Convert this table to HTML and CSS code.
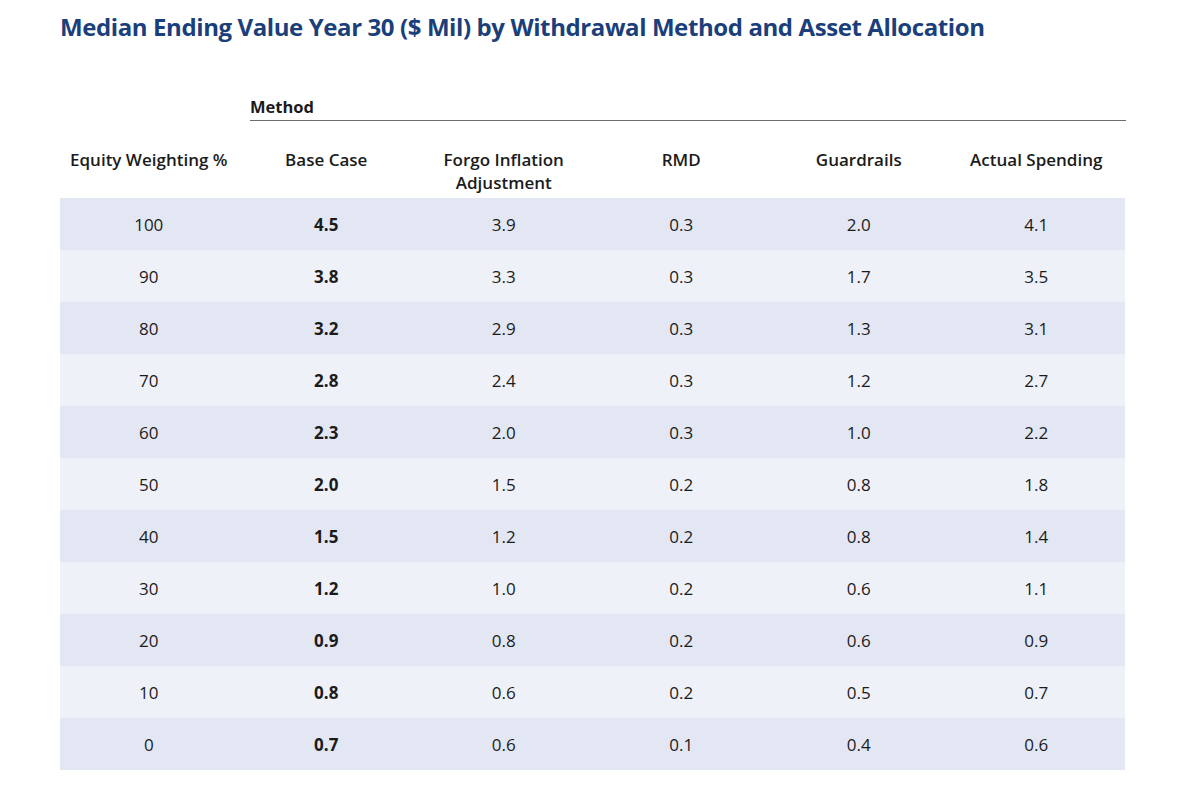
FILE: index.html
```html
<!DOCTYPE html>
<html>
<head>
<meta charset="utf-8">
<link rel="stylesheet" href="styles.css">
</head>
<body>
<h1 class="title">Median Ending Value Year 30 ($ Mil) by Withdrawal Method and Asset Allocation</h1>
<div class="wrap">
  <div class="method">Method</div>
  <div class="grid head">
    <div class="cell">Equity Weighting %</div>
    <div class="cell">Base Case</div>
    <div class="cell">Forgo Inflation<br>Adjustment</div>
    <div class="cell">RMD</div>
    <div class="cell">Guardrails</div>
    <div class="cell">Actual Spending</div>
  </div>
  <div class="rows">
    <div class="grid row"><div class="cell">100</div><div class="cell b">4.5</div><div class="cell">3.9</div><div class="cell">0.3</div><div class="cell">2.0</div><div class="cell">4.1</div></div>
    <div class="grid row"><div class="cell">90</div><div class="cell b">3.8</div><div class="cell">3.3</div><div class="cell">0.3</div><div class="cell">1.7</div><div class="cell">3.5</div></div>
    <div class="grid row"><div class="cell">80</div><div class="cell b">3.2</div><div class="cell">2.9</div><div class="cell">0.3</div><div class="cell">1.3</div><div class="cell">3.1</div></div>
    <div class="grid row"><div class="cell">70</div><div class="cell b">2.8</div><div class="cell">2.4</div><div class="cell">0.3</div><div class="cell">1.2</div><div class="cell">2.7</div></div>
    <div class="grid row"><div class="cell">60</div><div class="cell b">2.3</div><div class="cell">2.0</div><div class="cell">0.3</div><div class="cell">1.0</div><div class="cell">2.2</div></div>
    <div class="grid row"><div class="cell">50</div><div class="cell b">2.0</div><div class="cell">1.5</div><div class="cell">0.2</div><div class="cell">0.8</div><div class="cell">1.8</div></div>
    <div class="grid row"><div class="cell">40</div><div class="cell b">1.5</div><div class="cell">1.2</div><div class="cell">0.2</div><div class="cell">0.8</div><div class="cell">1.4</div></div>
    <div class="grid row"><div class="cell">30</div><div class="cell b">1.2</div><div class="cell">1.0</div><div class="cell">0.2</div><div class="cell">0.6</div><div class="cell">1.1</div></div>
    <div class="grid row"><div class="cell">20</div><div class="cell b">0.9</div><div class="cell">0.8</div><div class="cell">0.2</div><div class="cell">0.6</div><div class="cell">0.9</div></div>
    <div class="grid row"><div class="cell">10</div><div class="cell b">0.8</div><div class="cell">0.6</div><div class="cell">0.2</div><div class="cell">0.5</div><div class="cell">0.7</div></div>
    <div class="grid row"><div class="cell">0</div><div class="cell b">0.7</div><div class="cell">0.6</div><div class="cell">0.1</div><div class="cell">0.4</div><div class="cell">0.6</div></div>
  </div>
</div>
</body>
</html>
```
FILE: styles.css
```css
html, body {
  margin: 0;
  padding: 0;
  background: #ffffff;
}
body {
  font-family: "Open Sans", "Noto Sans", sans-serif;
  color: #1b1b1b;
}
.title {
  margin: 0;
  padding: 10px 0 0 60px;
  font-size: 24px;
  line-height: 34px;
  font-weight: 700;
  color: #1b3f7b;
  letter-spacing: -0.4px;
}
.wrap {
  width: 1065px;
  margin: 52px 0 0 60px;
}
.method {
  margin-left: 190px;
  width: 876px;
  font-size: 16.5px;
  font-weight: 700;
  line-height: 22px;
  padding-bottom: 2px;
  border-bottom: 1.5px solid #6e6e6e;
}
.grid {
  display: grid;
  grid-template-columns: repeat(6, 1fr);
}
.head {
  padding-top: 27px;
  height: 50px;
  font-size: 17px;
  font-weight: 600;
  line-height: 23px;
}
.head .cell {
  text-align: center;
}
.row {
  height: 52px;
  align-items: center;
  font-size: 17px;
  background: #e3e7f3;
}
.row:nth-child(even) {
  background: #eff1f9;
}
.row .cell {
  text-align: center;
}
.b {
  font-weight: 700;
}
```
